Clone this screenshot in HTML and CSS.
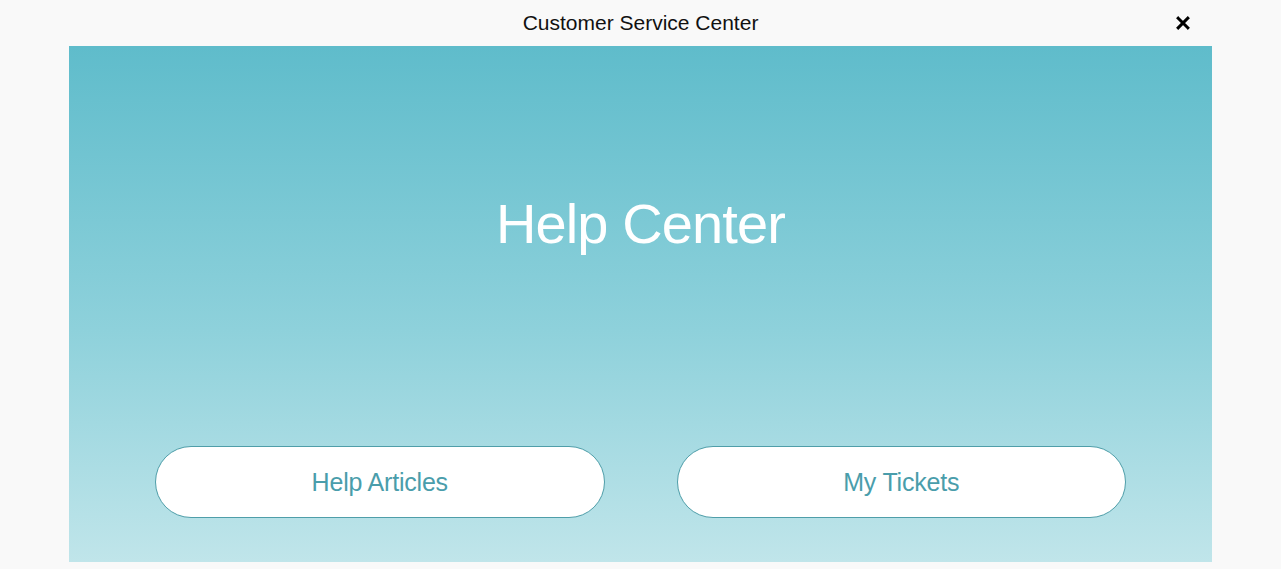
FILE: index.html
```html
<!DOCTYPE html>
<html lang="en">
<head>
<meta charset="utf-8">
<title>Customer Service Center</title>
<link rel="stylesheet" href="styles.css">
</head>
<body>
<header class="topbar">
  <div class="topbar-spacer"></div>
  <h1 class="topbar-title">Customer Service Center</h1>
  <button class="close-btn" aria-label="Close">
    <svg viewBox="0 0 14 14" width="14" height="14" aria-hidden="true">
      <path d="M2.2 2.2 L11.8 11.8 M11.8 2.2 L2.2 11.8" stroke="#000" stroke-width="3" stroke-linecap="square" fill="none"/>
    </svg>
  </button>
</header>
<main class="hero">
  <h2 class="hero-title">Help Center</h2>
  <div class="hero-actions">
    <button class="pill-btn">Help Articles</button>
    <button class="pill-btn">My Tickets</button>
  </div>
</main>
</body>
</html>
```
FILE: styles.css
```css
* { box-sizing: border-box; }
html, body { margin: 0; padding: 0; }
body {
  background: #f9f9f9;
  font-family: "Liberation Sans", Arial, sans-serif;
  width: 1281px;
  height: 569px;
  overflow: hidden;
}
.topbar {
  height: 46px;
  display: grid;
  grid-template-columns: 1fr auto 1fr;
  align-items: center;
}
.topbar-title {
  margin: 0;
  font-size: 21px;
  font-weight: normal;
  color: #111;
  line-height: 24px;
}
.close-btn {
  justify-self: end;
  margin-right: 91px;
  border: 0;
  background: none;
  padding: 0;
  width: 14px;
  height: 14px;
  display: flex;
  cursor: pointer;
}
.hero {
  margin: 0 69px;
  height: 516px;
  background: linear-gradient(to bottom, #5fbccb 0%, #8ed1db 55%, #c0e5ea 100%);
  display: flex;
  flex-direction: column;
  padding: 0 86px 44px;
}
.hero-title {
  margin: 146px 0 0;
  text-align: center;
  color: #fff;
  font-weight: normal;
  font-size: 56px;
  line-height: 64px;
  letter-spacing: -0.9px;
}
.hero-actions {
  margin-top: auto;
  display: grid;
  grid-template-columns: 1fr 1fr;
  gap: 72px;
}
.pill-btn {
  height: 72px;
  border-radius: 36px;
  border: 1px solid #4f9ea9;
  background: #fff;
  color: #4a9dab;
  font-family: "Liberation Sans", Arial, sans-serif;
  font-size: 25px;
  letter-spacing: -0.2px;
  padding: 0;
  cursor: pointer;
}
```
